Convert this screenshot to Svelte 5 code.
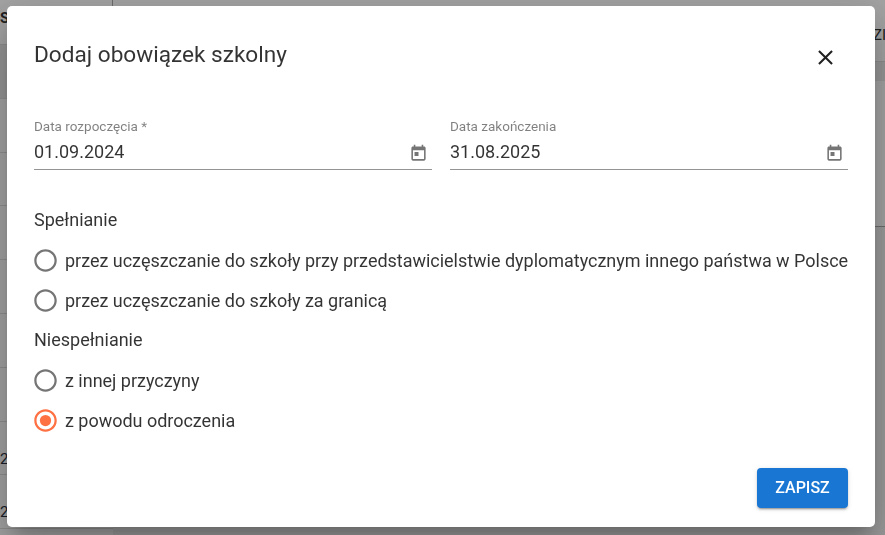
<script lang="ts">
  const fields = [
    { label: "Data rozpoczęcia *", value: "01.09.2024" },
    { label: "Data zakończenia", value: "31.08.2025" },
  ];
  const groups = [
    {
      name: "Spełnianie",
      options: [
        "przez uczęszczanie do szkoły przy przedstawicielstwie dyplomatycznym innego państwa w Polsce",
        "przez uczęszczanie do szkoły za granicą",
      ],
    },
    { name: "Niespełnianie", options: ["z innej przyczyny", "z powodu odroczenia"] },
  ];
  let selected = $state("z powodu odroczenia");
</script>

<div class="page">
  <div class="side">
    <div class="side-head">Szkoła</div>
    {#each Array(9) as _, i}
      <div class="side-row">{i > 6 ? "2024" : ""}</div>
    {/each}
  </div>
  <div class="main">
    <div class="main-head">ZI</div>
    <div class="main-band"></div>
    <div class="main-empty"></div>
    <div class="main-rest"></div>
  </div>
</div>

<div class="backdrop"></div>

<div class="dialog" role="dialog" aria-label="Dodaj obowiązek szkolny">
  <header>
    <h2>Dodaj obowiązek szkolny</h2>
    <button class="close" aria-label="Zamknij">
      <svg viewBox="0 0 24 24" width="25" height="25"><path d="M19 6.41 17.59 5 12 10.59 6.41 5 5 6.41 10.59 12 5 17.59 6.41 19 12 13.41 17.59 19 19 17.59 13.41 12z" /></svg>
    </button>
  </header>

  <div class="fields">
    {#each fields as f}
      <div class="field">
        <span class="label">{f.label}</span>
        <div class="input">
          <span>{f.value}</span>
          <svg viewBox="0 0 24 24" width="19" height="19"><path d="M19 3h-1V1h-2v2H8V1H6v2H5c-1.11 0-1.99.9-1.99 2L3 19c0 1.1.89 2 2 2h14c1.1 0 2-.9 2-2V5c0-1.1-.9-2-2-2zm0 16H5V8h14v11zM7 10h5v5H7z" /></svg>
        </div>
      </div>
    {/each}
  </div>

  <div class="groups">
    {#each groups as g}
      <div class="group-name">{g.name}</div>
      {#each g.options as o}
        <button class="option" class:checked={selected === o} onclick={() => (selected = o)}>
          <svg viewBox="0 0 24 24" width="27" height="27">
            <path d="M12 2C6.48 2 2 6.48 2 12s4.48 10 10 10 10-4.48 10-10S17.52 2 12 2zm0 18c-4.42 0-8-3.58-8-8s3.58-8 8-8 8 3.58 8 8-3.58 8-8 8z" />
            {#if selected === o}<circle cx="12" cy="12" r="5" />{/if}
          </svg>
          <span>{o}</span>
        </button>
      {/each}
    {/each}
  </div>

  <div class="actions">
    <button class="save">ZAPISZ</button>
  </div>
</div>

<style>
  :global(body) {
    margin: 0;
    overflow: hidden;
    background: #fff;
    font-family: Roboto, sans-serif;
  }
  .page {
    display: flex;
    height: 535px;
    color: #333;
    overflow: hidden;
  }
  .side {
    flex: 0 0 113px;
    box-sizing: border-box;
  }
  .side-head {
    height: 45px;
    box-sizing: border-box;
    padding-top: 9px;
    font: 700 15px/18px Roboto, sans-serif;
    border-bottom: 1px solid #ddd;
    border-right: 1px solid #aaa;
  }
  .side-row {
    height: 53.8px;
    box-sizing: border-box;
    border-bottom: 1px solid #e0e0e0;
    font: 15px/18px Roboto, sans-serif;
    padding-top: 28px;
    color: #2a3140;
    overflow: hidden;
    white-space: nowrap;
  }
  .side-head + .side-row { background: #e9e9e9; }
  .main {
    flex: 1;
    display: flex;
    flex-direction: column;
    min-width: 0;
  }
  .main-head {
    height: 62px;
    box-sizing: border-box;
    padding-top: 26px;
    margin-right: -1px;
    text-align: right;
    font: 15px/18px Roboto, sans-serif;
    border-bottom: 1px solid #ddd;
  }
  .main-band { height: 19px; background: #ececec; }
  .main-empty { height: 145px; border-bottom: 1px solid #aaa; }
  .main-rest { flex: 1; background: #f3f3f3; }
  .backdrop {
    position: fixed;
    inset: 0;
    background: rgba(0, 0, 0, 0.36);
  }
  .dialog {
    position: fixed;
    top: 6px;
    left: 7px;
    width: 868px;
    height: 521px;
    box-sizing: border-box;
    padding: 27px 27px 19px;
    display: flex;
    flex-direction: column;
    background: #fff;
    border-radius: 5px;
    box-shadow: 0 11px 15px -7px rgba(0, 0, 0, 0.2), 0 24px 38px 3px rgba(0, 0, 0, 0.14), 0 9px 46px 8px rgba(0, 0, 0, 0.12);
    color: rgba(0, 0, 0, 0.8);
    font: 18px/27px Roboto, sans-serif;
  }
  header {
    display: flex;
    justify-content: space-between;
    align-items: center;
    height: 44px;
  }
  h2 {
    margin: 0;
    font: 400 22.6px/44px Roboto, sans-serif;
  }
  .close {
    display: flex;
    margin: 0 10px 0 0;
    padding: 0;
    border: 0;
    background: none;
    fill: rgba(0, 0, 0, 0.87);
    transform: translateY(2px);
  }
  .fields {
    display: grid;
    grid-template-columns: 1fr 1fr;
    gap: 18px;
    margin-top: 41px;
  }
  .label {
    display: block;
    font-size: 13.5px;
    line-height: 16px;
    color: rgba(0, 0, 0, 0.5);
  }
  .input {
    display: flex;
    justify-content: space-between;
    align-items: center;
    height: 35px;
    border-bottom: 1px solid #949494;
  }
  .input svg {
    margin: 4px 4.5px 0 0;
    fill: rgba(0, 0, 0, 0.54);
  }
  .groups {
    margin-top: 30px;
  }
  .group-name {
    height: 40px;
    line-height: 40px;
  }
  .group-name:not(:first-child) {
    margin-top: -1px;
  }
  .option {
    display: flex;
    align-items: center;
    gap: 6px;
    height: 40.5px;
    width: 100%;
    padding: 0;
    margin-left: -2px;
    border: 0;
    background: none;
    color: inherit;
    font: inherit;
    letter-spacing: -0.02px;
    white-space: nowrap;
    fill: rgba(0, 0, 0, 0.54);
  }
  .option svg { flex: none; }
  .option.checked { fill: #ff7043; }
  .actions {
    margin-top: auto;
    display: flex;
    justify-content: flex-end;
  }
  .save {
    width: 91px;
    height: 40px;
    padding: 0;
    border: 0;
    border-radius: 4px;
    background: #1976d2;
    color: #fff;
    font: 500 16px/24px Roboto, sans-serif;
    box-shadow: 0 3px 1px -2px rgba(0, 0, 0, 0.2), 0 2px 2px 0 rgba(0, 0, 0, 0.14), 0 1px 5px 0 rgba(0, 0, 0, 0.12);
  }
</style>
